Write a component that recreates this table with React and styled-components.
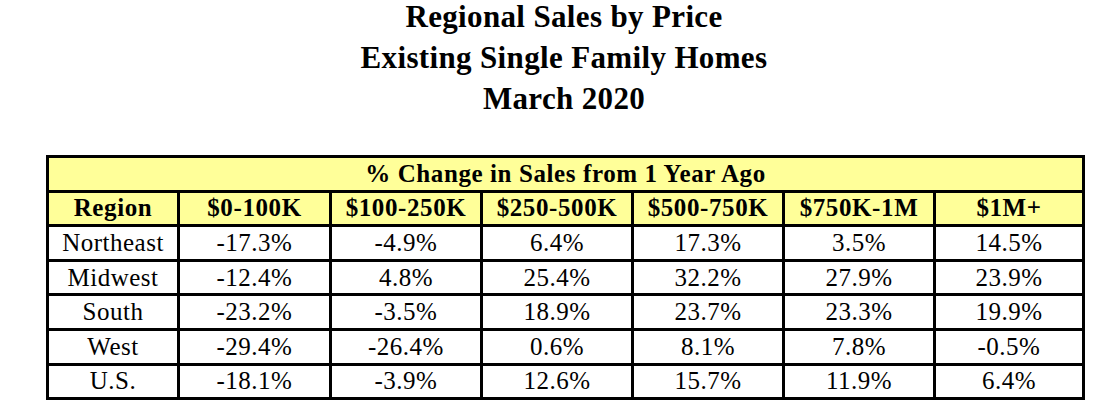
import React from 'react';
import styled, { createGlobalStyle } from 'styled-components';

const GlobalStyle = createGlobalStyle`
  html, body {
    margin: 0;
    padding: 0;
    background: #fff;
  }
  body {
    font-family: "Liberation Serif", "Times New Roman", serif;
    color: #000;
  }
`;

const Page = styled.div`
  width: 1036px;
  padding-left: 46px;
`;

const Heading = styled.h1`
  margin: -4px 0 0;
  font-size: 31px;
  line-height: 41px;
  font-weight: bold;
  letter-spacing: 0.35px;
  text-align: center;
`;

const Table = styled.table`
  margin-top: 36px;
  width: 1036px;
  border-collapse: collapse;
  table-layout: fixed;
  font-size: 25px;
  letter-spacing: 0.5px;
`;

const Row = styled.tr`
  height: 34.6px;
`;

const Cell = styled.td`
  border: 3px solid #000;
  padding: 0;
  text-align: center;
  line-height: 28px;
  background: ${(p) => (p.$head ? '#ffff99' : '#fff')};
  font-weight: ${(p) => (p.$head ? 'bold' : 'normal')};
  letter-spacing: ${(p) => (p.$head ? '0.6px' : '0.5px')};
`;

const widths = [131, 152, 151, 151, 151, 151, 149];
const columns = ['Region', '$0-100K', '$100-250K', '$250-500K', '$500-750K', '$750K-1M', '$1M+'];

const data = [
  ['Northeast', '-17.3%', '-4.9%', '6.4%', '17.3%', '3.5%', '14.5%'],
  ['Midwest', '-12.4%', '4.8%', '25.4%', '32.2%', '27.9%', '23.9%'],
  ['South', '-23.2%', '-3.5%', '18.9%', '23.7%', '23.3%', '19.9%'],
  ['West', '-29.4%', '-26.4%', '0.6%', '8.1%', '7.8%', '-0.5%'],
  ['U.S.', '-18.1%', '-3.9%', '12.6%', '15.7%', '11.9%', '6.4%'],
];

export default function App() {
  return (
    <>
      <GlobalStyle />
      <Page>
        <Heading>
          Regional Sales by Price
          <br />
          Existing Single Family Homes
          <br />
          March 2020
        </Heading>
        <Table>
          <colgroup>
            {widths.map((w, i) => (
              <col key={i} style={{ width: w }} />
            ))}
          </colgroup>
          <tbody>
            <Row>
              <Cell $head colSpan={7}>% Change in Sales from 1 Year Ago</Cell>
            </Row>
            <Row>
              {columns.map((c) => (
                <Cell $head key={c}>{c}</Cell>
              ))}
            </Row>
            {data.map((r) => (
              <Row key={r[0]}>
                {r.map((v, i) => (
                  <Cell key={i}>{v}</Cell>
                ))}
              </Row>
            ))}
          </tbody>
        </Table>
      </Page>
    </>
  );
}
